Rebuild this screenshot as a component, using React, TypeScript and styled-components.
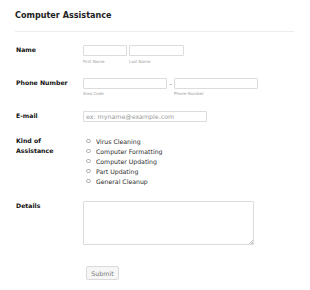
import styled, { createGlobalStyle } from 'styled-components';

const GlobalStyle = createGlobalStyle`
	html, body {
		margin: 0;
		padding: 0;
		background: #fff;
	}
	body {
		font-family: 'DejaVu Sans', Verdana, sans-serif;
		color: #222;
	}
`;

const FormWrapper = styled.form`
	width: 310px;
	padding: 0 16px 0 15px;
	box-sizing: border-box;
`;

const Header = styled.div`
	padding-top: 10px;
	padding-bottom: 10px;
	border-bottom: 1px solid #ececec;
	margin-bottom: 13px;
`;

const Title = styled.h2`
	margin: 0;
	font-size: 8.1px;
	line-height: 11px;
	font-weight: bold;
	color: #222;
`;

const Row = styled.div<{ $space?: number }>`
	display: flex;
	align-items: flex-start;
	margin-bottom: ${(p) => p.$space ?? 14}px;
`;

const Label = styled.label`
	width: 67px;
	padding-left: 1px;
	flex-shrink: 0;
	font-size: 6.2px;
	line-height: 10px;
	font-weight: bold;
	color: #111;
`;

const Field = styled.div`
	display: flex;
	flex-direction: column;
`;

const Inline = styled.div`
	display: flex;
	align-items: flex-start;
`;

const TextInput = styled.input<{ $w: number }>`
	width: ${(p) => p.$w}px;
	height: 11px;
	box-sizing: border-box;
	border: 1px solid #dcdcdc;
	border-radius: 1px;
	padding: 0 2px;
	margin: 0;
	font-family: inherit;
	font-size: 6.3px;
	color: #333;
	outline: none;

	&::placeholder {
		color: #9a9a9a;
	}
`;

const Sub = styled.span<{ $w: number }>`
	width: ${(p) => p.$w}px;
	font-size: 4px;
	line-height: 5px;
	margin-top: 2.5px;
	color: #9a9a9a;
`;

const Dash = styled.span`
	width: 7px;
	text-align: center;
	font-size: 6.2px;
	line-height: 11px;
	color: #555;
`;

const RadioList = styled.div`
	display: flex;
	flex-direction: column;
	padding-left: 3px;
`;

const RadioItem = styled.label`
	display: flex;
	align-items: center;
	height: 10px;
	font-size: 6.2px;
	color: #2a2a2a;
`;

const Radio = styled.input`
	appearance: none;
	width: 4.5px;
	height: 4.5px;
	margin: 0 5.5px 0 0;
	border: 0.7px solid #b5b5b5;
	border-radius: 50%;
	background: #fff;
`;

const TextArea = styled.textarea`
	width: 171px;
	height: 44px;
	box-sizing: border-box;
	border: 1px solid #dcdcdc;
	border-radius: 1px;
	margin: 0;
	padding: 2px;
	font-family: inherit;
	font-size: 6.3px;
	outline: none;

	&::-webkit-resizer {
		background: linear-gradient(
			135deg,
			transparent 84%,
			#c4c4c4 84% 88%,
			transparent 88% 93%,
			#c4c4c4 93% 97%,
			transparent 97%
		);
	}
`;

const SubmitButton = styled.button`
	margin-left: 71px;
	width: 33px;
	height: 14px;
	box-sizing: border-box;
	padding: 0;
	border: 1px solid #dadada;
	border-radius: 2px;
	background: #f6f6f6;
	font-family: inherit;
	font-size: 6.3px;
	color: #777;
`;

const assistanceKinds = [
	'Virus Cleaning',
	'Computer Formatting',
	'Computer Updating',
	'Part Updating',
	'General Cleanup',
];

const App = () => {
	return (
		<FormWrapper onSubmit={(e) => e.preventDefault()}>
			<GlobalStyle />
			<Header>
				<Title>Computer Assistance</Title>
			</Header>

			<Row $space={14}>
				<Label>Name</Label>
				<Inline>
					<Field>
						<TextInput $w={44} />
						<Sub $w={44}>First Name</Sub>
					</Field>
					<Field style={{ marginLeft: 2 }}>
						<TextInput $w={55} />
						<Sub $w={55}>Last Name</Sub>
					</Field>
				</Inline>
			</Row>

			<Row $space={15}>
				<Label>Phone Number</Label>
				<Inline>
					<Field>
						<TextInput $w={84} />
						<Sub $w={84}>Area Code</Sub>
					</Field>
					<Dash>-</Dash>
					<Field>
						<TextInput $w={84} />
						<Sub $w={84}>Phone Number</Sub>
					</Field>
				</Inline>
			</Row>

			<Row $space={14}>
				<Label>E-mail</Label>
				<TextInput $w={124} placeholder="ex: myname@example.com" />
			</Row>

			<Row $space={15}>
				<Label>
					Kind of
					<br />
					Assistance
				</Label>
				<RadioList>
					{assistanceKinds.map((kind) => (
						<RadioItem key={kind}>
							<Radio type="radio" name="kind" value={kind} />
							{kind}
						</RadioItem>
					))}
				</RadioList>
			</Row>

			<Row $space={21}>
				<Label>Details</Label>
				<TextArea />
			</Row>

			<Row>
				<SubmitButton type="submit">Submit</SubmitButton>
			</Row>
		</FormWrapper>
	);
};

export default App;
